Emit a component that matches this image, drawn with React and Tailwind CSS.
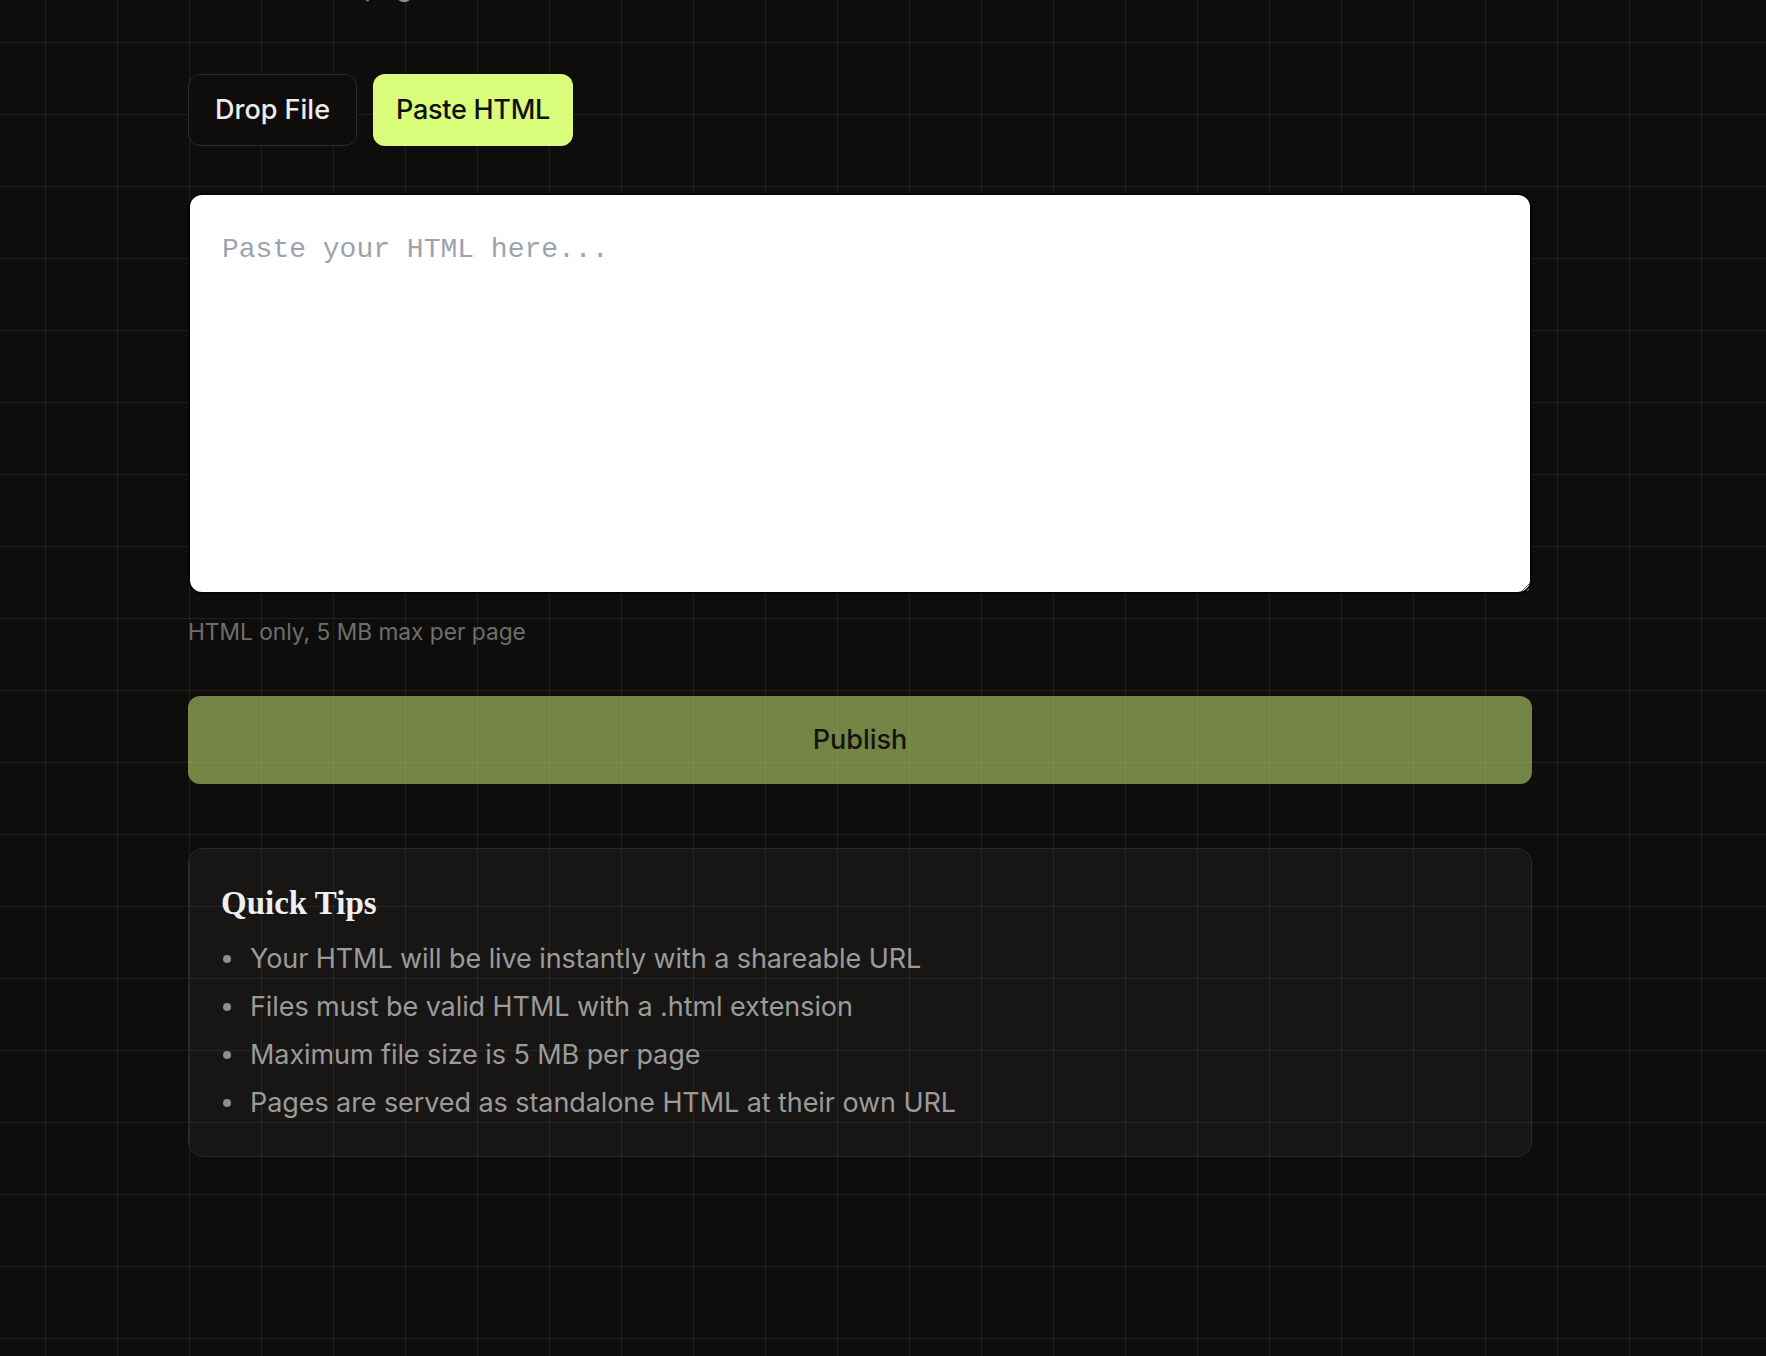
export default function App() {
  const tips = [
    "Your HTML will be live instantly with a shareable URL",
    "Files must be valid HTML with a .html extension",
    "Maximum file size is 5 MB per page",
    "Pages are served as standalone HTML at their own URL",
  ];
  return (
    <div className="min-h-screen w-full overflow-hidden bg-[#0e0d0c] bg-[linear-gradient(to_right,rgba(255,255,255,0.075)_1px,transparent_1px),linear-gradient(to_bottom,rgba(255,255,255,0.075)_1px,transparent_1px)] bg-[size:72px_72px] bg-[position:45px_42px] font-['Inter',sans-serif]">
      <div className="ml-[188px] w-[1344px] pb-[200px]">
        <p className="-mt-[33px] text-[27px] leading-[40px] text-[#8a8a8a]">Create a new page</p>

        <div className="mt-[67px] flex gap-4">
          <button className="h-[72px] rounded-xl border border-[#2d2d2d] bg-[#0e0d0c] px-[26px] text-[27px] font-medium text-[#ececec]">
            Drop File
          </button>
          <button className="h-[72px] rounded-xl bg-[#dafc7b] px-[23px] text-[27px] font-medium tracking-[-0.01em] text-[#111111]">
            Paste HTML
          </button>
        </div>

        <textarea
          className="mt-[47px] block h-[401px] w-full resize-y rounded-[14px] border-2 border-[#050505] bg-white pb-[30px] pl-[32px] pr-[30px] pt-[35px] font-['Liberation_Mono',monospace] text-[28px] leading-[40px] text-[#111] outline-none placeholder:text-[#9ca3af]"
          placeholder="Paste your HTML here..."
        />

        <p className="mt-[20px] text-[22.7px] leading-[36px] text-[#6e6e6e]">HTML only, 5 MB max per page</p>

        <button className="mt-[46px] flex h-[88px] w-full items-center justify-center rounded-xl bg-[#dafc7b]/50 text-[27px] font-medium text-[#141414]">
          Publish
        </button>

        <div className="mt-[64px] rounded-[15px] border border-[#2a2a2a] bg-white/[0.04] px-8 pb-[29px] pt-[34px]">
          <h3 className="mb-3 font-['Liberation_Serif',serif] text-[33px] font-bold leading-[40px] text-[#efefef]">
            Quick Tips
          </h3>
          <ul>
            {tips.map((t) => (
              <li key={t} className="flex h-[48px] items-center text-[27px] tracking-[-0.003em] text-[#9b9b9b]">
                <span className="ml-[2px] mr-[19px] h-[8px] w-[8px] shrink-0 rounded-full bg-[#8e8e8e]" />
                {t}
              </li>
            ))}
          </ul>
        </div>
      </div>
    </div>
  );
}
